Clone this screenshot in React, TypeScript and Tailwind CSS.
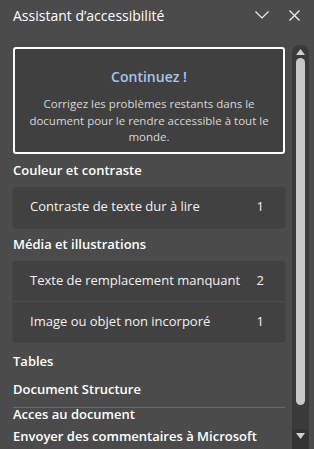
const issuesColor = [{ label: 'Contraste de texte dur à lire', count: 1 }]
const issuesMedia = [
  { label: 'Texte de remplacement manquant', count: 2 },
  { label: 'Image ou objet non incorporé', count: 1 },
]

function IssueCard({ items }: { items: { label: string; count: number }[] }) {
  return (
    <div className="mt-[8px] rounded-[3px] bg-[#414141] shadow-[0_1px_2px_rgba(0,0,0,0.25)]">
      {items.map((item, i) => (
        <div
          key={item.label}
          className={`flex h-[40px] items-center justify-between pl-[17px] pr-[21px] text-[13px] text-[#f2f2f2] ${
            i > 0 ? 'border-t border-[#4e4e4e]' : ''
          }`}
        >
          <span>{item.label}</span>
          <span>{item.count}</span>
        </div>
      ))}
    </div>
  )
}

function Heading({ children, className = '' }: { children: string; className?: string }) {
  return <div className={`h-[18px] text-[13px] leading-[18px] font-semibold text-white ${className}`}>{children}</div>
}

export default function App() {
  return (
    <div
      className="flex h-[449px] w-[314px] flex-col overflow-hidden bg-[#4b4b4b]"
      style={{ fontFamily: '"Open Sans", "Noto Sans", sans-serif' }}
    >
      <header className="flex h-[30px] shrink-0 items-center justify-between pl-[13px] pr-[14px]">
        <h1 className="text-[14px] text-white">Assistant d’accessibilité</h1>
        <div className="flex items-center gap-[20px]">
          <svg width="14" height="8" viewBox="0 0 14 8" fill="none" stroke="#f0f0f0" strokeWidth="1.2">
            <polyline points="0.5,0.5 7,7 13.5,0.5" />
          </svg>
          <svg width="11" height="11" viewBox="0 0 11 11" fill="none" stroke="#f0f0f0" strokeWidth="1.2">
            <line x1="0.5" y1="0.5" x2="10.5" y2="10.5" />
            <line x1="10.5" y1="0.5" x2="0.5" y2="10.5" />
          </svg>
        </div>
      </header>

      <div className="flex min-h-0 flex-1">
        <div className="flex w-[292px] flex-col">
          <div className="min-h-0 flex-1 overflow-hidden pl-[13px] pr-[7px]">
            <div className="mt-[17px] flex h-[107px] flex-col items-center rounded-[3px] border-2 border-white bg-[#404040] pt-[18px] text-center">
              <div className="text-[14px] leading-[20px] font-semibold text-[#a9c3ee]">Continuez !</div>
              <p className="mt-[9px] px-[10px] text-[11.5px] leading-[16.5px] text-[#d8d8d8]">
                Corrigez les problèmes restants dans le document pour le rendre accessible à tout le monde.
              </p>
            </div>

            <Heading className="mt-[7px]">Couleur et contraste</Heading>
            <IssueCard items={issuesColor} />

            <Heading className="mt-[8px]">Média et illustrations</Heading>
            <IssueCard items={issuesMedia} />

            <Heading className="mt-[11px]">Tables</Heading>
            <Heading className="mt-[10px]">Document Structure</Heading>
          </div>

          <div className="ml-[13px] mr-[7px] h-[42px] shrink-0 overflow-hidden border-t border-[#6a6a6a]">
            <div className="-mt-[5px] text-[13px] leading-[22px] font-semibold text-white">
              <div>Acces au document</div>
              <div>Envoyer des commentaires à Microsoft</div>
            </div>
          </div>
        </div>

        <div className="mt-[15px] flex w-[17px] flex-col items-center rounded-t-[8px] bg-[#3a3a3a]">
          <svg className="mt-[4px]" width="9" height="6" viewBox="0 0 9 6">
            <polygon points="4.5,0 9,6 0,6" fill="#d0d0d0" />
          </svg>
          <div className="mt-[3px] h-[347px] w-[9px] rounded-full bg-[#c8c8c8]" />
          <div className="mt-[24px] flex h-[20px] w-full items-start justify-center rounded-t-[6px] bg-[#333333] pt-[4px]">
            <svg width="9" height="6" viewBox="0 0 9 6">
              <polygon points="0,0 9,0 4.5,6" fill="#d0d0d0" />
            </svg>
          </div>
        </div>
      </div>
    </div>
  )
}
